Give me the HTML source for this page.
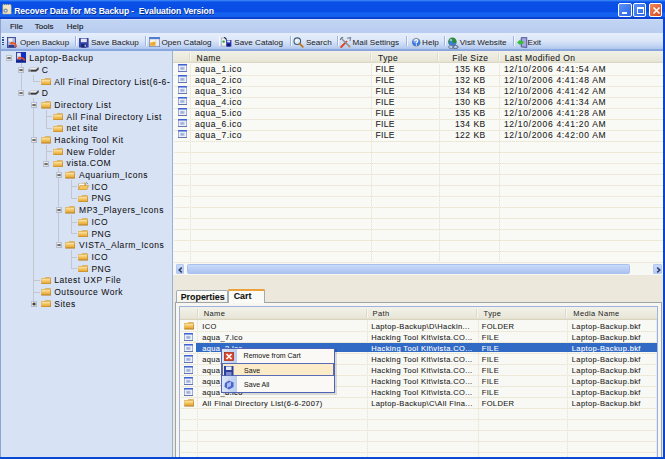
<!DOCTYPE html><html><head><meta charset="utf-8"><style>
*{margin:0;padding:0;box-sizing:border-box}
html,body{width:665px;height:459px;overflow:hidden;background:#d8e2f5}
body{position:relative;font-family:"Liberation Sans",sans-serif}
div{position:absolute}
.t{white-space:pre;line-height:12px;height:12px;-webkit-text-stroke:0.08px currentColor}
</style></head><body>
<div style="left:0.00px;top:0.00px;width:665.00px;height:18.50px;background:linear-gradient(to bottom,#3d8cf8 0px,#2a74f2 1px,#0a4fe6 2px,#084ee6 11.5px,#1662f0 13px,#1460ee 16.5px,#0a42d2 17.3px,#0a3ecc 18.5px)"></div>
<svg style="position:absolute;left:2px;top:4.3px" width="9.5" height="10.3" viewBox="0 0 9.5 10.3"><path d="M1 0.3H2V1H3V0.3H4V1H5V0.3H6V1H7V0.3H8L9.2 1.5V10H0.8V2z" fill="#efe6c4" stroke="#b8ac80" stroke-width="0.5"/><circle cx="3.6" cy="6.6" r="2.2" fill="#8a8f9c"/><circle cx="3.6" cy="6.6" r="0.9" fill="#e8ecf4"/></svg>
<div class="t" style="left:14.20px;top:4.60px;font-size:8.6px;letter-spacing:-0.1px;color:#fff;font-weight:bold;text-shadow:0.7px 0.7px 0 #0a2a8a;-webkit-text-stroke:0">Recover Data for MS Backup -  Evaluation Version</div>
<div style="left:618.00px;top:3.00px;width:14.00px;height:13.50px;background:linear-gradient(135deg,#5b93f8,#2a63e8);border:1px solid #fff;border-radius:2px"><div style="left:3px;top:8px;width:5px;height:2px;background:#fff"></div></div>
<div style="left:633.20px;top:3.00px;width:13.20px;height:13.50px;background:linear-gradient(135deg,#5b93f8,#2a63e8);border:1px solid #fff;border-radius:2px"><div style="left:2.5px;top:2.5px;width:7px;height:7px;border:1px solid #fff;border-top-width:2px"></div></div>
<div style="left:648.50px;top:3.00px;width:13.00px;height:13.50px;background:linear-gradient(135deg,#ef8a5e,#d9461c);border:1px solid #fff;border-radius:2px"><svg style="position:absolute;left:2px;top:2px" width="9" height="9" viewBox="0 0 9 9"><path d="M1.5 1.5L7.5 7.5M7.5 1.5L1.5 7.5" stroke="#fff" stroke-width="1.6"/></svg></div>
<div style="left:1.00px;top:18.50px;width:662.00px;height:14.80px;background:linear-gradient(to bottom,#d8e4f8 0px,#c2d4f3 1.2px,#bdd0f2 8px,#b8ccf0 14.8px)"></div>
<div class="t" style="left:9.90px;top:21.00px;font-size:7.9px;letter-spacing:0.1px;color:#1a1a1a;-webkit-text-stroke:0.15px #1a1a1a">File</div>
<div class="t" style="left:34.70px;top:21.00px;font-size:7.9px;letter-spacing:0.1px;color:#1a1a1a;-webkit-text-stroke:0.15px #1a1a1a">Tools</div>
<div class="t" style="left:66.80px;top:21.00px;font-size:7.9px;letter-spacing:0.1px;color:#1a1a1a;-webkit-text-stroke:0.15px #1a1a1a">Help</div>
<div style="left:1.00px;top:33.30px;width:662.00px;height:16.40px;background:linear-gradient(to bottom,#e6eefb 0%,#dbe6f8 45%,#c3d5f3 75%,#a8c1ec 100%)"></div>
<div style="left:1.00px;top:48.60px;width:662.00px;height:2.40px;background:linear-gradient(to bottom,#8eabe0,#86a4dc)"></div>
<div style="left:2.3px;top:36.5px;width:1.5px;height:9px;background:repeating-linear-gradient(to bottom,#284d96 0 1.3px,transparent 1.3px 2.3px)"></div>
<svg style="position:absolute;left:6.8px;top:37px" width="11" height="11" viewBox="0 0 11 11"><rect x="0.4" y="0.4" width="8" height="10" fill="#aab4d4" stroke="#28368a" stroke-width="0.8"/><rect x="1.6" y="1.4" width="4" height="3.2" fill="#eef0f8"/><rect x="1.4" y="8" width="6" height="2" fill="#2c3a8c"/><path d="M4.2 6.2 Q8.8 5.2 9.3 10.2" stroke="#f0521c" stroke-width="1.6" fill="none"/><path d="M2.6 6.2L5.6 4.6L5.6 8.2z" fill="#f0521c"/></svg>
<div class="t" style="left:19.90px;top:37.00px;font-size:8.1px;letter-spacing:0.02px;color:#1a1a1a;-webkit-text-stroke:0">Open Backup</div>
<div style="left:74.60px;top:36.30px;width:1.00px;height:10.20px;background:#9fb4dc"></div>
<div style="left:76.00px;top:36.30px;width:1.00px;height:10.20px;background:#f4f7fd"></div>
<svg style="position:absolute;left:79px;top:38px" width="10" height="10" viewBox="0 0 10 10"><rect x="0" y="0" width="9.6" height="9.6" rx="0.6" fill="#3242a6"/><rect x="1.8" y="0.6" width="6" height="3.6" fill="#e4e8f6"/><rect x="2.2" y="6" width="5" height="3.6" fill="#1a2470"/><rect x="5.6" y="6.6" width="1.2" height="2.2" fill="#c8d0f0"/></svg>
<div class="t" style="left:90.90px;top:37.00px;font-size:8.1px;letter-spacing:0.02px;color:#1a1a1a;-webkit-text-stroke:0">Save Backup</div>
<div style="left:144.80px;top:36.30px;width:1.00px;height:10.20px;background:#9fb4dc"></div>
<div style="left:146.00px;top:36.30px;width:1.00px;height:10.20px;background:#f4f7fd"></div>
<svg style="position:absolute;left:149px;top:37px" width="11" height="10" viewBox="0 0 11 10"><rect x="0.3" y="0.3" width="10.4" height="9.4" fill="#c7cfe0" stroke="#6a7aa8" stroke-width="0.6"/><rect x="0.3" y="0.3" width="10.4" height="1.6" fill="#3d72d8"/><rect x="1.2" y="2.6" width="5.4" height="6.2" fill="#fbf5e2"/><path d="M1.2 5.4H3.4L4 4.8H6.4V8.8H1.2z" fill="#f0a828"/><rect x="7.2" y="2.6" width="2.6" height="6.2" fill="#eef1f8"/></svg>
<div class="t" style="left:161.40px;top:37.00px;font-size:8.1px;letter-spacing:0.02px;color:#1a1a1a;-webkit-text-stroke:0">Open Catalog</div>
<div style="left:218.50px;top:36.30px;width:1.00px;height:10.20px;background:#9fb4dc"></div>
<div style="left:219.00px;top:36.30px;width:1.00px;height:10.20px;background:#f4f7fd"></div>
<svg style="position:absolute;left:221.2px;top:37px" width="11" height="10" viewBox="0 0 11 10"><rect x="0.3" y="1" width="5.2" height="8" fill="#f4f1e6" stroke="#8a93b0" stroke-width="0.5"/><circle cx="2.6" cy="4.6" r="1.2" fill="#1aa048"/><path d="M3.2 0.2L5.6 2.6" stroke="#1a2a60" stroke-width="1.2"/><rect x="5.2" y="3" width="5.2" height="6.6" fill="#2430a8"/><rect x="6.2" y="3.4" width="3" height="2" fill="#e0e6fa"/><rect x="6.4" y="7" width="2.6" height="2.4" fill="#101a60"/></svg>
<div class="t" style="left:234.30px;top:37.00px;font-size:8.1px;letter-spacing:0.02px;color:#1a1a1a;-webkit-text-stroke:0">Save Catalog</div>
<div style="left:289.70px;top:36.30px;width:1.00px;height:10.20px;background:#9fb4dc"></div>
<div style="left:291.00px;top:36.30px;width:1.00px;height:10.20px;background:#f4f7fd"></div>
<svg style="position:absolute;left:293.1px;top:37px" width="11" height="11" viewBox="0 0 11 11"><circle cx="4.3" cy="4.2" r="3.3" fill="#d8ecfb" stroke="#4a5a78" stroke-width="1.1"/><circle cx="3.6" cy="3.4" r="1.2" fill="#ffffff"/><path d="M6.6 6.6L9.8 9.8" stroke="#c07818" stroke-width="1.9" stroke-linecap="round"/></svg>
<div class="t" style="left:305.90px;top:37.00px;font-size:8.1px;letter-spacing:0.02px;color:#1a1a1a;-webkit-text-stroke:0">Search</div>
<div style="left:337.00px;top:36.30px;width:1.00px;height:10.20px;background:#9fb4dc"></div>
<div style="left:338.00px;top:36.30px;width:1.00px;height:10.20px;background:#f4f7fd"></div>
<svg style="position:absolute;left:339.8px;top:37px" width="12" height="11" viewBox="0 0 12 11"><path d="M1.2 10L6.5 4.6" stroke="#e0401a" stroke-width="1.8" stroke-linecap="round"/><path d="M2.2 2.2L9.6 9.6" stroke="#8a909c" stroke-width="1.5"/><path d="M0.6 3.2A2.3 2.3 0 0 1 3.2 0.6" stroke="#6e7480" stroke-width="1.3" fill="none"/><path d="M7 1.2L10.6 0.6L10 4.2" stroke="#7a8090" stroke-width="1.1" fill="none"/><circle cx="9.6" cy="9.4" r="1" fill="#c89238"/></svg>
<div class="t" style="left:352.60px;top:37.00px;font-size:8.1px;letter-spacing:0.02px;color:#1a1a1a;-webkit-text-stroke:0">Mail Settings</div>
<div style="left:405.80px;top:36.30px;width:1.00px;height:10.20px;background:#9fb4dc"></div>
<div style="left:407.00px;top:36.30px;width:1.00px;height:10.20px;background:#f4f7fd"></div>
<svg style="position:absolute;left:410.5px;top:37px" width="11" height="11" viewBox="0 0 11 11"><circle cx="5.2" cy="5.4" r="4.8" fill="#e8d8a0"/><circle cx="5.2" cy="5.4" r="4.2" fill="#3a78e0"/><circle cx="4.2" cy="4" r="2.2" fill="#8cb8f4" opacity="0.7"/><path d="M3.6 4.1Q3.8 2.6 5.3 2.6Q6.9 2.7 6.8 4Q6.7 5 5.4 5.6V6.6" stroke="#fff" stroke-width="1.2" fill="none"/><rect x="4.8" y="7.4" width="1.2" height="1.2" fill="#fff"/></svg>
<div class="t" style="left:422.10px;top:37.00px;font-size:8.1px;letter-spacing:0.02px;color:#1a1a1a;-webkit-text-stroke:0">Help</div>
<div style="left:444.20px;top:36.30px;width:1.00px;height:10.20px;background:#9fb4dc"></div>
<div style="left:445.00px;top:36.30px;width:1.00px;height:10.20px;background:#f4f7fd"></div>
<svg style="position:absolute;left:446.9px;top:36.5px" width="12" height="12" viewBox="0 0 12 12"><circle cx="5.4" cy="4.8" r="4.3" fill="#2c8a3a"/><path d="M2 2.6Q4.6 1.4 5.6 3.4Q4.4 5.4 6.6 6.2Q8.4 5 9.4 6.4Q8 9 5.4 9.1Q3 9 1.6 6.6Q3.2 6 2 2.6z" fill="#3c7cd8"/><circle cx="4" cy="3" r="1.3" fill="#b8e8a8" opacity="0.7"/><ellipse cx="4.2" cy="10" rx="2.8" ry="1.5" fill="none" stroke="#7a869e" stroke-width="1"/><ellipse cx="8.4" cy="10" rx="2.8" ry="1.5" fill="none" stroke="#5a6680" stroke-width="1"/></svg>
<div class="t" style="left:459.80px;top:37.00px;font-size:8.1px;letter-spacing:0.02px;color:#1a1a1a;-webkit-text-stroke:0">Visit Website</div>
<div style="left:513.00px;top:36.30px;width:1.00px;height:10.20px;background:#9fb4dc"></div>
<div style="left:514.00px;top:36.30px;width:1.00px;height:10.20px;background:#f4f7fd"></div>
<svg style="position:absolute;left:517.3px;top:37px" width="11" height="11" viewBox="0 0 11 11"><path d="M4.2 0.6L9.8 0.2V10.6L4.2 10z" fill="#7a78c8" stroke="#3a3e80" stroke-width="0.6"/><path d="M5 1.4L9 1.2V9.6L5 9.2z" fill="#a8a8e0"/><path d="M0 5.4L3.6 2.2V4H6.4V6.8H3.6V8.6z" fill="#34c030"/></svg>
<div class="t" style="left:527.50px;top:37.00px;font-size:8.1px;letter-spacing:0.02px;color:#1a1a1a;-webkit-text-stroke:0">Exit</div>
<div style="left:1.00px;top:50.50px;width:170.80px;height:406.10px;background:#d8e2f5"></div>
<div style="left:171.70px;top:50.50px;width:1.20px;height:406.10px;background:#9ab0d8"></div>
<div style="left:21.00px;top:62.90px;width:1.00px;height:7.19px;background:#c3c6ce"></div>
<div style="left:33.00px;top:74.59px;width:1.00px;height:7.19px;background:#c3c6ce"></div>
<div style="left:33.80px;top:81.00px;width:6.00px;height:1.00px;background:#c3c6ce"></div>
<div style="left:21.00px;top:62.90px;width:1.00px;height:30.57px;background:#c3c6ce"></div>
<div style="left:33.00px;top:97.97px;width:1.00px;height:7.19px;background:#c3c6ce"></div>
<div style="left:46.00px;top:109.66px;width:1.00px;height:7.19px;background:#c3c6ce"></div>
<div style="left:46.20px;top:116.00px;width:6.00px;height:1.00px;background:#c3c6ce"></div>
<div style="left:46.00px;top:109.66px;width:1.00px;height:18.88px;background:#c3c6ce"></div>
<div style="left:46.20px;top:128.00px;width:6.00px;height:1.00px;background:#c3c6ce"></div>
<div style="left:33.00px;top:97.97px;width:1.00px;height:42.26px;background:#c3c6ce"></div>
<div style="left:46.00px;top:144.73px;width:1.00px;height:7.19px;background:#c3c6ce"></div>
<div style="left:46.20px;top:151.00px;width:6.00px;height:1.00px;background:#c3c6ce"></div>
<div style="left:46.00px;top:144.73px;width:1.00px;height:18.88px;background:#c3c6ce"></div>
<div style="left:58.00px;top:168.11px;width:1.00px;height:7.19px;background:#c3c6ce"></div>
<div style="left:71.00px;top:179.80px;width:1.00px;height:7.19px;background:#c3c6ce"></div>
<div style="left:71.00px;top:186.00px;width:6.00px;height:1.00px;background:#c3c6ce"></div>
<div style="left:71.00px;top:179.80px;width:1.00px;height:18.88px;background:#c3c6ce"></div>
<div style="left:71.00px;top:198.00px;width:6.00px;height:1.00px;background:#c3c6ce"></div>
<div style="left:58.00px;top:168.11px;width:1.00px;height:42.26px;background:#c3c6ce"></div>
<div style="left:71.00px;top:214.87px;width:1.00px;height:7.19px;background:#c3c6ce"></div>
<div style="left:71.00px;top:222.00px;width:6.00px;height:1.00px;background:#c3c6ce"></div>
<div style="left:71.00px;top:214.87px;width:1.00px;height:18.88px;background:#c3c6ce"></div>
<div style="left:71.00px;top:233.00px;width:6.00px;height:1.00px;background:#c3c6ce"></div>
<div style="left:58.00px;top:168.11px;width:1.00px;height:77.33px;background:#c3c6ce"></div>
<div style="left:71.00px;top:249.94px;width:1.00px;height:7.19px;background:#c3c6ce"></div>
<div style="left:71.00px;top:257.00px;width:6.00px;height:1.00px;background:#c3c6ce"></div>
<div style="left:71.00px;top:249.94px;width:1.00px;height:18.88px;background:#c3c6ce"></div>
<div style="left:71.00px;top:268.00px;width:6.00px;height:1.00px;background:#c3c6ce"></div>
<div style="left:33.00px;top:97.97px;width:1.00px;height:182.54px;background:#c3c6ce"></div>
<div style="left:33.80px;top:280.00px;width:6.00px;height:1.00px;background:#c3c6ce"></div>
<div style="left:33.00px;top:97.97px;width:1.00px;height:194.23px;background:#c3c6ce"></div>
<div style="left:33.80px;top:292.00px;width:6.00px;height:1.00px;background:#c3c6ce"></div>
<div style="left:33.00px;top:97.97px;width:1.00px;height:205.92px;background:#c3c6ce"></div>
<svg style="position:absolute;left:6.00px;top:55.40px" width="6" height="6" viewBox="0 0 6 6"><defs><linearGradient id="bg0" x1="0" y1="0" x2="1" y2="1"><stop offset="0" stop-color="#ffffff"/><stop offset="1" stop-color="#d4d0c2"/></linearGradient></defs><rect x="0.35" y="0.35" width="5.3" height="5.3" rx="0.6" fill="url(#bg0)" stroke="#93a4c3" stroke-width="0.7"/><path d="M1.3 3H4.7" stroke="#101010" stroke-width="1.1"/></svg>
<svg style="position:absolute;left:16px;top:52.3px" width="10" height="10.5" viewBox="0 0 10 10.5"><rect x="0" y="0" width="10" height="10.5" fill="#1f2f9e"/><rect x="0.8" y="0.8" width="4.2" height="6.5" fill="#c9ccd8"/><rect x="1.6" y="1.6" width="2.6" height="2.2" fill="#f2f2f5"/><rect x="5.2" y="0.8" width="4" height="5" fill="#0a2fd0"/><path d="M2.5 6.2 Q6.5 4.6 8.8 8.6" stroke="#f04a1a" stroke-width="1.6" fill="none"/><path d="M1.2 6.3L4.2 4.6L4 8z" fill="#f04a1a"/><rect x="0" y="8.8" width="10" height="1.7" fill="#0d1f8a"/></svg>
<div class="t" style="left:29.30px;top:52.20px;font-size:8.5px;letter-spacing:0.55px;color:#111;-webkit-text-stroke:0.05px #111">Laptop-Backup</div>
<svg style="position:absolute;left:18.40px;top:67.09px" width="6" height="6" viewBox="0 0 6 6"><defs><linearGradient id="bg1" x1="0" y1="0" x2="1" y2="1"><stop offset="0" stop-color="#ffffff"/><stop offset="1" stop-color="#d4d0c2"/></linearGradient></defs><rect x="0.35" y="0.35" width="5.3" height="5.3" rx="0.6" fill="url(#bg1)" stroke="#93a4c3" stroke-width="0.7"/><path d="M1.3 3H4.7" stroke="#101010" stroke-width="1.1"/></svg>
<svg style="position:absolute;left:28.00px;top:66.89px" width="11" height="5" viewBox="0 0 11 5"><path d="M0.3 2.6L3.2 0.3H10.7L8 2.6z" fill="#ececec" stroke="#9a9a9a" stroke-width="0.4"/><path d="M0.3 2.6H8V4.8H0.3z" fill="#8a8a8a"/><path d="M8 2.6L10.7 0.3V2.4L8 4.8z" fill="#3e3e3e"/><rect x="3" y="3" width="5" height="1.4" fill="#3a3a3a"/></svg>
<div class="t" style="left:41.80px;top:63.89px;font-size:8.5px;letter-spacing:0.55px;color:#111;-webkit-text-stroke:0.05px #111">C</div>
<svg style="position:absolute;left:40.60px;top:77.78px" width="10" height="7.5" viewBox="0 0 10 7.5"><defs><linearGradient id="fg" x1="0" y1="0" x2="0" y2="1"><stop offset="0" stop-color="#fde9b4"/><stop offset="0.45" stop-color="#f5c45e"/><stop offset="1" stop-color="#e0a030"/></linearGradient></defs><path d="M0.3 1H3.6L4.4 0.2H9.7V7.3H0.3z" fill="#d9a540"/><rect x="0.6" y="1.7" width="9" height="5.2" fill="url(#fg)"/><rect x="0.3" y="6.7" width="9.4" height="0.7" fill="#a8741c"/><rect x="9.1" y="1.7" width="0.6" height="5.6" fill="#b98428"/></svg>
<div class="t" style="left:54.20px;top:75.58px;font-size:8.5px;letter-spacing:0.55px;color:#111;-webkit-text-stroke:0.05px #111">All Final Directory List(6-6-</div>
<svg style="position:absolute;left:18.40px;top:90.47px" width="6" height="6" viewBox="0 0 6 6"><defs><linearGradient id="bg3" x1="0" y1="0" x2="1" y2="1"><stop offset="0" stop-color="#ffffff"/><stop offset="1" stop-color="#d4d0c2"/></linearGradient></defs><rect x="0.35" y="0.35" width="5.3" height="5.3" rx="0.6" fill="url(#bg3)" stroke="#93a4c3" stroke-width="0.7"/><path d="M1.3 3H4.7" stroke="#101010" stroke-width="1.1"/></svg>
<svg style="position:absolute;left:28.00px;top:90.27px" width="11" height="5" viewBox="0 0 11 5"><path d="M0.3 2.6L3.2 0.3H10.7L8 2.6z" fill="#ececec" stroke="#9a9a9a" stroke-width="0.4"/><path d="M0.3 2.6H8V4.8H0.3z" fill="#8a8a8a"/><path d="M8 2.6L10.7 0.3V2.4L8 4.8z" fill="#3e3e3e"/><rect x="3" y="3" width="5" height="1.4" fill="#3a3a3a"/></svg>
<div class="t" style="left:41.80px;top:87.27px;font-size:8.5px;letter-spacing:0.55px;color:#111;-webkit-text-stroke:0.05px #111">D</div>
<svg style="position:absolute;left:30.80px;top:102.16px" width="6" height="6" viewBox="0 0 6 6"><defs><linearGradient id="bg4" x1="0" y1="0" x2="1" y2="1"><stop offset="0" stop-color="#ffffff"/><stop offset="1" stop-color="#d4d0c2"/></linearGradient></defs><rect x="0.35" y="0.35" width="5.3" height="5.3" rx="0.6" fill="url(#bg4)" stroke="#93a4c3" stroke-width="0.7"/><path d="M1.3 3H4.7" stroke="#101010" stroke-width="1.1"/></svg>
<svg style="position:absolute;left:40.60px;top:101.16px" width="10" height="7.5" viewBox="0 0 10 7.5"><defs><linearGradient id="fg" x1="0" y1="0" x2="0" y2="1"><stop offset="0" stop-color="#fde9b4"/><stop offset="0.45" stop-color="#f5c45e"/><stop offset="1" stop-color="#e0a030"/></linearGradient></defs><path d="M0.3 1H3.6L4.4 0.2H9.7V7.3H0.3z" fill="#d9a540"/><rect x="0.6" y="1.7" width="9" height="5.2" fill="url(#fg)"/><rect x="0.3" y="6.7" width="9.4" height="0.7" fill="#a8741c"/><rect x="9.1" y="1.7" width="0.6" height="5.6" fill="#b98428"/></svg>
<div class="t" style="left:54.20px;top:98.96px;font-size:8.5px;letter-spacing:0.55px;color:#111;-webkit-text-stroke:0.05px #111">Directory List</div>
<svg style="position:absolute;left:53.00px;top:112.85px" width="10" height="7.5" viewBox="0 0 10 7.5"><defs><linearGradient id="fg" x1="0" y1="0" x2="0" y2="1"><stop offset="0" stop-color="#fde9b4"/><stop offset="0.45" stop-color="#f5c45e"/><stop offset="1" stop-color="#e0a030"/></linearGradient></defs><path d="M0.3 1H3.6L4.4 0.2H9.7V7.3H0.3z" fill="#d9a540"/><rect x="0.6" y="1.7" width="9" height="5.2" fill="url(#fg)"/><rect x="0.3" y="6.7" width="9.4" height="0.7" fill="#a8741c"/><rect x="9.1" y="1.7" width="0.6" height="5.6" fill="#b98428"/></svg>
<div class="t" style="left:66.60px;top:110.65px;font-size:8.5px;letter-spacing:0.55px;color:#111;-webkit-text-stroke:0.05px #111">All Final Directory List</div>
<svg style="position:absolute;left:53.00px;top:124.54px" width="10" height="7.5" viewBox="0 0 10 7.5"><defs><linearGradient id="fg" x1="0" y1="0" x2="0" y2="1"><stop offset="0" stop-color="#fde9b4"/><stop offset="0.45" stop-color="#f5c45e"/><stop offset="1" stop-color="#e0a030"/></linearGradient></defs><path d="M0.3 1H3.6L4.4 0.2H9.7V7.3H0.3z" fill="#d9a540"/><rect x="0.6" y="1.7" width="9" height="5.2" fill="url(#fg)"/><rect x="0.3" y="6.7" width="9.4" height="0.7" fill="#a8741c"/><rect x="9.1" y="1.7" width="0.6" height="5.6" fill="#b98428"/></svg>
<div class="t" style="left:66.60px;top:122.34px;font-size:8.5px;letter-spacing:0.55px;color:#111;-webkit-text-stroke:0.05px #111">net site</div>
<svg style="position:absolute;left:30.80px;top:137.23px" width="6" height="6" viewBox="0 0 6 6"><defs><linearGradient id="bg7" x1="0" y1="0" x2="1" y2="1"><stop offset="0" stop-color="#ffffff"/><stop offset="1" stop-color="#d4d0c2"/></linearGradient></defs><rect x="0.35" y="0.35" width="5.3" height="5.3" rx="0.6" fill="url(#bg7)" stroke="#93a4c3" stroke-width="0.7"/><path d="M1.3 3H4.7" stroke="#101010" stroke-width="1.1"/></svg>
<svg style="position:absolute;left:40.60px;top:136.23px" width="10" height="7.5" viewBox="0 0 10 7.5"><defs><linearGradient id="fg" x1="0" y1="0" x2="0" y2="1"><stop offset="0" stop-color="#fde9b4"/><stop offset="0.45" stop-color="#f5c45e"/><stop offset="1" stop-color="#e0a030"/></linearGradient></defs><path d="M0.3 1H3.6L4.4 0.2H9.7V7.3H0.3z" fill="#d9a540"/><rect x="0.6" y="1.7" width="9" height="5.2" fill="url(#fg)"/><rect x="0.3" y="6.7" width="9.4" height="0.7" fill="#a8741c"/><rect x="9.1" y="1.7" width="0.6" height="5.6" fill="#b98428"/></svg>
<div class="t" style="left:54.20px;top:134.03px;font-size:8.5px;letter-spacing:0.55px;color:#111;-webkit-text-stroke:0.05px #111">Hacking Tool Kit</div>
<svg style="position:absolute;left:53.00px;top:147.92px" width="10" height="7.5" viewBox="0 0 10 7.5"><defs><linearGradient id="fg" x1="0" y1="0" x2="0" y2="1"><stop offset="0" stop-color="#fde9b4"/><stop offset="0.45" stop-color="#f5c45e"/><stop offset="1" stop-color="#e0a030"/></linearGradient></defs><path d="M0.3 1H3.6L4.4 0.2H9.7V7.3H0.3z" fill="#d9a540"/><rect x="0.6" y="1.7" width="9" height="5.2" fill="url(#fg)"/><rect x="0.3" y="6.7" width="9.4" height="0.7" fill="#a8741c"/><rect x="9.1" y="1.7" width="0.6" height="5.6" fill="#b98428"/></svg>
<div class="t" style="left:66.60px;top:145.72px;font-size:8.5px;letter-spacing:0.55px;color:#111;-webkit-text-stroke:0.05px #111">New Folder</div>
<svg style="position:absolute;left:43.20px;top:160.61px" width="6" height="6" viewBox="0 0 6 6"><defs><linearGradient id="bg9" x1="0" y1="0" x2="1" y2="1"><stop offset="0" stop-color="#ffffff"/><stop offset="1" stop-color="#d4d0c2"/></linearGradient></defs><rect x="0.35" y="0.35" width="5.3" height="5.3" rx="0.6" fill="url(#bg9)" stroke="#93a4c3" stroke-width="0.7"/><path d="M1.3 3H4.7" stroke="#101010" stroke-width="1.1"/></svg>
<svg style="position:absolute;left:53.00px;top:159.61px" width="10" height="7.5" viewBox="0 0 10 7.5"><defs><linearGradient id="fg" x1="0" y1="0" x2="0" y2="1"><stop offset="0" stop-color="#fde9b4"/><stop offset="0.45" stop-color="#f5c45e"/><stop offset="1" stop-color="#e0a030"/></linearGradient></defs><path d="M0.3 1H3.6L4.4 0.2H9.7V7.3H0.3z" fill="#d9a540"/><rect x="0.6" y="1.7" width="9" height="5.2" fill="url(#fg)"/><rect x="0.3" y="6.7" width="9.4" height="0.7" fill="#a8741c"/><rect x="9.1" y="1.7" width="0.6" height="5.6" fill="#b98428"/></svg>
<div class="t" style="left:66.60px;top:157.41px;font-size:8.5px;letter-spacing:0.55px;color:#111;-webkit-text-stroke:0.05px #111">vista.COM</div>
<svg style="position:absolute;left:55.60px;top:172.30px" width="6" height="6" viewBox="0 0 6 6"><defs><linearGradient id="bg10" x1="0" y1="0" x2="1" y2="1"><stop offset="0" stop-color="#ffffff"/><stop offset="1" stop-color="#d4d0c2"/></linearGradient></defs><rect x="0.35" y="0.35" width="5.3" height="5.3" rx="0.6" fill="url(#bg10)" stroke="#93a4c3" stroke-width="0.7"/><path d="M1.3 3H4.7" stroke="#101010" stroke-width="1.1"/></svg>
<svg style="position:absolute;left:65.40px;top:171.30px" width="10" height="7.5" viewBox="0 0 10 7.5"><defs><linearGradient id="fg" x1="0" y1="0" x2="0" y2="1"><stop offset="0" stop-color="#fde9b4"/><stop offset="0.45" stop-color="#f5c45e"/><stop offset="1" stop-color="#e0a030"/></linearGradient></defs><path d="M0.3 1H3.6L4.4 0.2H9.7V7.3H0.3z" fill="#d9a540"/><rect x="0.6" y="1.7" width="9" height="5.2" fill="url(#fg)"/><rect x="0.3" y="6.7" width="9.4" height="0.7" fill="#a8741c"/><rect x="9.1" y="1.7" width="0.6" height="5.6" fill="#b98428"/></svg>
<div class="t" style="left:79.00px;top:169.10px;font-size:8.5px;letter-spacing:0.55px;color:#111;-webkit-text-stroke:0.05px #111">Aquarium_Icons</div>
<svg style="position:absolute;left:77.80px;top:182.39px" width="11" height="8" viewBox="0 0 11 8"><path d="M0.3 1.6H3.4L4.2 0.8H8V7.7H0.3z" fill="#d9a540"/><rect x="1" y="1.4" width="5.5" height="4" fill="#ffffff" stroke="#b0b0b0" stroke-width="0.4"/><path d="M0.3 7.7L2 3.4H10.6L8.8 7.7z" fill="#f5c45e" stroke="#b98428" stroke-width="0.5"/><path d="M8.2 0.6L9.6 1.6" stroke="#3050a0" stroke-width="0.8"/></svg>
<div class="t" style="left:91.40px;top:180.79px;font-size:8.5px;letter-spacing:0.55px;color:#111;-webkit-text-stroke:0.05px #111">ICO</div>
<svg style="position:absolute;left:77.80px;top:194.68px" width="10" height="7.5" viewBox="0 0 10 7.5"><defs><linearGradient id="fg" x1="0" y1="0" x2="0" y2="1"><stop offset="0" stop-color="#fde9b4"/><stop offset="0.45" stop-color="#f5c45e"/><stop offset="1" stop-color="#e0a030"/></linearGradient></defs><path d="M0.3 1H3.6L4.4 0.2H9.7V7.3H0.3z" fill="#d9a540"/><rect x="0.6" y="1.7" width="9" height="5.2" fill="url(#fg)"/><rect x="0.3" y="6.7" width="9.4" height="0.7" fill="#a8741c"/><rect x="9.1" y="1.7" width="0.6" height="5.6" fill="#b98428"/></svg>
<div class="t" style="left:91.40px;top:192.48px;font-size:8.5px;letter-spacing:0.55px;color:#111;-webkit-text-stroke:0.05px #111">PNG</div>
<svg style="position:absolute;left:55.60px;top:207.37px" width="6" height="6" viewBox="0 0 6 6"><defs><linearGradient id="bg13" x1="0" y1="0" x2="1" y2="1"><stop offset="0" stop-color="#ffffff"/><stop offset="1" stop-color="#d4d0c2"/></linearGradient></defs><rect x="0.35" y="0.35" width="5.3" height="5.3" rx="0.6" fill="url(#bg13)" stroke="#93a4c3" stroke-width="0.7"/><path d="M1.3 3H4.7" stroke="#101010" stroke-width="1.1"/></svg>
<svg style="position:absolute;left:65.40px;top:206.37px" width="10" height="7.5" viewBox="0 0 10 7.5"><defs><linearGradient id="fg" x1="0" y1="0" x2="0" y2="1"><stop offset="0" stop-color="#fde9b4"/><stop offset="0.45" stop-color="#f5c45e"/><stop offset="1" stop-color="#e0a030"/></linearGradient></defs><path d="M0.3 1H3.6L4.4 0.2H9.7V7.3H0.3z" fill="#d9a540"/><rect x="0.6" y="1.7" width="9" height="5.2" fill="url(#fg)"/><rect x="0.3" y="6.7" width="9.4" height="0.7" fill="#a8741c"/><rect x="9.1" y="1.7" width="0.6" height="5.6" fill="#b98428"/></svg>
<div class="t" style="left:79.00px;top:204.17px;font-size:8.5px;letter-spacing:0.55px;color:#111;-webkit-text-stroke:0.05px #111">MP3_Players_Icons</div>
<svg style="position:absolute;left:77.80px;top:218.06px" width="10" height="7.5" viewBox="0 0 10 7.5"><defs><linearGradient id="fg" x1="0" y1="0" x2="0" y2="1"><stop offset="0" stop-color="#fde9b4"/><stop offset="0.45" stop-color="#f5c45e"/><stop offset="1" stop-color="#e0a030"/></linearGradient></defs><path d="M0.3 1H3.6L4.4 0.2H9.7V7.3H0.3z" fill="#d9a540"/><rect x="0.6" y="1.7" width="9" height="5.2" fill="url(#fg)"/><rect x="0.3" y="6.7" width="9.4" height="0.7" fill="#a8741c"/><rect x="9.1" y="1.7" width="0.6" height="5.6" fill="#b98428"/></svg>
<div class="t" style="left:91.40px;top:215.86px;font-size:8.5px;letter-spacing:0.55px;color:#111;-webkit-text-stroke:0.05px #111">ICO</div>
<svg style="position:absolute;left:77.80px;top:229.75px" width="10" height="7.5" viewBox="0 0 10 7.5"><defs><linearGradient id="fg" x1="0" y1="0" x2="0" y2="1"><stop offset="0" stop-color="#fde9b4"/><stop offset="0.45" stop-color="#f5c45e"/><stop offset="1" stop-color="#e0a030"/></linearGradient></defs><path d="M0.3 1H3.6L4.4 0.2H9.7V7.3H0.3z" fill="#d9a540"/><rect x="0.6" y="1.7" width="9" height="5.2" fill="url(#fg)"/><rect x="0.3" y="6.7" width="9.4" height="0.7" fill="#a8741c"/><rect x="9.1" y="1.7" width="0.6" height="5.6" fill="#b98428"/></svg>
<div class="t" style="left:91.40px;top:227.55px;font-size:8.5px;letter-spacing:0.55px;color:#111;-webkit-text-stroke:0.05px #111">PNG</div>
<svg style="position:absolute;left:55.60px;top:242.44px" width="6" height="6" viewBox="0 0 6 6"><defs><linearGradient id="bg16" x1="0" y1="0" x2="1" y2="1"><stop offset="0" stop-color="#ffffff"/><stop offset="1" stop-color="#d4d0c2"/></linearGradient></defs><rect x="0.35" y="0.35" width="5.3" height="5.3" rx="0.6" fill="url(#bg16)" stroke="#93a4c3" stroke-width="0.7"/><path d="M1.3 3H4.7" stroke="#101010" stroke-width="1.1"/></svg>
<svg style="position:absolute;left:65.40px;top:241.44px" width="10" height="7.5" viewBox="0 0 10 7.5"><defs><linearGradient id="fg" x1="0" y1="0" x2="0" y2="1"><stop offset="0" stop-color="#fde9b4"/><stop offset="0.45" stop-color="#f5c45e"/><stop offset="1" stop-color="#e0a030"/></linearGradient></defs><path d="M0.3 1H3.6L4.4 0.2H9.7V7.3H0.3z" fill="#d9a540"/><rect x="0.6" y="1.7" width="9" height="5.2" fill="url(#fg)"/><rect x="0.3" y="6.7" width="9.4" height="0.7" fill="#a8741c"/><rect x="9.1" y="1.7" width="0.6" height="5.6" fill="#b98428"/></svg>
<div class="t" style="left:79.00px;top:239.24px;font-size:8.5px;letter-spacing:0.55px;color:#111;-webkit-text-stroke:0.05px #111">VISTA_Alarm_Icons</div>
<svg style="position:absolute;left:77.80px;top:253.13px" width="10" height="7.5" viewBox="0 0 10 7.5"><defs><linearGradient id="fg" x1="0" y1="0" x2="0" y2="1"><stop offset="0" stop-color="#fde9b4"/><stop offset="0.45" stop-color="#f5c45e"/><stop offset="1" stop-color="#e0a030"/></linearGradient></defs><path d="M0.3 1H3.6L4.4 0.2H9.7V7.3H0.3z" fill="#d9a540"/><rect x="0.6" y="1.7" width="9" height="5.2" fill="url(#fg)"/><rect x="0.3" y="6.7" width="9.4" height="0.7" fill="#a8741c"/><rect x="9.1" y="1.7" width="0.6" height="5.6" fill="#b98428"/></svg>
<div class="t" style="left:91.40px;top:250.93px;font-size:8.5px;letter-spacing:0.55px;color:#111;-webkit-text-stroke:0.05px #111">ICO</div>
<svg style="position:absolute;left:77.80px;top:264.82px" width="10" height="7.5" viewBox="0 0 10 7.5"><defs><linearGradient id="fg" x1="0" y1="0" x2="0" y2="1"><stop offset="0" stop-color="#fde9b4"/><stop offset="0.45" stop-color="#f5c45e"/><stop offset="1" stop-color="#e0a030"/></linearGradient></defs><path d="M0.3 1H3.6L4.4 0.2H9.7V7.3H0.3z" fill="#d9a540"/><rect x="0.6" y="1.7" width="9" height="5.2" fill="url(#fg)"/><rect x="0.3" y="6.7" width="9.4" height="0.7" fill="#a8741c"/><rect x="9.1" y="1.7" width="0.6" height="5.6" fill="#b98428"/></svg>
<div class="t" style="left:91.40px;top:262.62px;font-size:8.5px;letter-spacing:0.55px;color:#111;-webkit-text-stroke:0.05px #111">PNG</div>
<svg style="position:absolute;left:40.60px;top:276.51px" width="10" height="7.5" viewBox="0 0 10 7.5"><defs><linearGradient id="fg" x1="0" y1="0" x2="0" y2="1"><stop offset="0" stop-color="#fde9b4"/><stop offset="0.45" stop-color="#f5c45e"/><stop offset="1" stop-color="#e0a030"/></linearGradient></defs><path d="M0.3 1H3.6L4.4 0.2H9.7V7.3H0.3z" fill="#d9a540"/><rect x="0.6" y="1.7" width="9" height="5.2" fill="url(#fg)"/><rect x="0.3" y="6.7" width="9.4" height="0.7" fill="#a8741c"/><rect x="9.1" y="1.7" width="0.6" height="5.6" fill="#b98428"/></svg>
<div class="t" style="left:54.20px;top:274.31px;font-size:8.5px;letter-spacing:0.55px;color:#111;-webkit-text-stroke:0.05px #111">Latest UXP File</div>
<svg style="position:absolute;left:40.60px;top:288.20px" width="10" height="7.5" viewBox="0 0 10 7.5"><defs><linearGradient id="fg" x1="0" y1="0" x2="0" y2="1"><stop offset="0" stop-color="#fde9b4"/><stop offset="0.45" stop-color="#f5c45e"/><stop offset="1" stop-color="#e0a030"/></linearGradient></defs><path d="M0.3 1H3.6L4.4 0.2H9.7V7.3H0.3z" fill="#d9a540"/><rect x="0.6" y="1.7" width="9" height="5.2" fill="url(#fg)"/><rect x="0.3" y="6.7" width="9.4" height="0.7" fill="#a8741c"/><rect x="9.1" y="1.7" width="0.6" height="5.6" fill="#b98428"/></svg>
<div class="t" style="left:54.20px;top:286.00px;font-size:8.5px;letter-spacing:0.55px;color:#111;-webkit-text-stroke:0.05px #111">Outsource Work</div>
<svg style="position:absolute;left:30.80px;top:300.89px" width="6" height="6" viewBox="0 0 6 6"><defs><linearGradient id="bg21" x1="0" y1="0" x2="1" y2="1"><stop offset="0" stop-color="#ffffff"/><stop offset="1" stop-color="#d4d0c2"/></linearGradient></defs><rect x="0.35" y="0.35" width="5.3" height="5.3" rx="0.6" fill="url(#bg21)" stroke="#93a4c3" stroke-width="0.7"/><path d="M1.3 3H4.7" stroke="#101010" stroke-width="1.1"/><path d="M3 1.4V4.6" stroke="#1a1a1a" stroke-width="1"/></svg>
<svg style="position:absolute;left:40.60px;top:299.89px" width="10" height="7.5" viewBox="0 0 10 7.5"><defs><linearGradient id="fg" x1="0" y1="0" x2="0" y2="1"><stop offset="0" stop-color="#fde9b4"/><stop offset="0.45" stop-color="#f5c45e"/><stop offset="1" stop-color="#e0a030"/></linearGradient></defs><path d="M0.3 1H3.6L4.4 0.2H9.7V7.3H0.3z" fill="#d9a540"/><rect x="0.6" y="1.7" width="9" height="5.2" fill="url(#fg)"/><rect x="0.3" y="6.7" width="9.4" height="0.7" fill="#a8741c"/><rect x="9.1" y="1.7" width="0.6" height="5.6" fill="#b98428"/></svg>
<div class="t" style="left:54.20px;top:297.69px;font-size:8.5px;letter-spacing:0.55px;color:#111;-webkit-text-stroke:0.05px #111">Sites</div>
<div style="left:173.20px;top:50.50px;width:489.80px;height:212.50px;background:#f9f9f6"></div>
<div style="left:173.20px;top:50.50px;width:489.80px;height:12.30px;background:linear-gradient(to bottom,#f1f0e7,#e9e7d9 80%,#e0dcc9)"></div>
<div style="left:173.20px;top:62.00px;width:489.80px;height:1.00px;background:#dcd7c2"></div>
<div style="left:189.00px;top:52.50px;width:1.00px;height:8.00px;background:#dedacb"></div>
<div style="left:190.00px;top:52.50px;width:1.00px;height:8.00px;background:#f7f6f0"></div>
<div style="left:370.30px;top:52.50px;width:1.00px;height:8.00px;background:#dedacb"></div>
<div style="left:371.30px;top:52.50px;width:1.00px;height:8.00px;background:#f7f6f0"></div>
<div style="left:436.60px;top:52.50px;width:1.00px;height:8.00px;background:#dedacb"></div>
<div style="left:437.60px;top:52.50px;width:1.00px;height:8.00px;background:#f7f6f0"></div>
<div style="left:498.20px;top:52.50px;width:1.00px;height:8.00px;background:#dedacb"></div>
<div style="left:499.20px;top:52.50px;width:1.00px;height:8.00px;background:#f7f6f0"></div>
<div class="t" style="left:196.60px;top:52.20px;font-size:8.5px;letter-spacing:0.4px;color:#222;">Name</div>
<div class="t" style="left:378.10px;top:52.20px;font-size:8.5px;letter-spacing:0.4px;color:#222;">Type</div>
<div class="t" style="left:452.30px;top:52.20px;font-size:8.5px;letter-spacing:0.4px;color:#222;">File Size</div>
<div class="t" style="left:504.70px;top:52.20px;font-size:8.5px;letter-spacing:0.4px;color:#222;">Last Modified On</div>
<div style="left:174.00px;top:75.00px;width:489.00px;height:1.00px;background:repeating-linear-gradient(to right,#e9e3cf 0 1px,#f1eee2 1px 2px)"></div>
<div style="left:174.00px;top:86.00px;width:489.00px;height:1.00px;background:repeating-linear-gradient(to right,#e9e3cf 0 1px,#f1eee2 1px 2px)"></div>
<div style="left:174.00px;top:97.00px;width:489.00px;height:1.00px;background:repeating-linear-gradient(to right,#e9e3cf 0 1px,#f1eee2 1px 2px)"></div>
<div style="left:174.00px;top:108.00px;width:489.00px;height:1.00px;background:repeating-linear-gradient(to right,#e9e3cf 0 1px,#f1eee2 1px 2px)"></div>
<div style="left:174.00px;top:119.00px;width:489.00px;height:1.00px;background:repeating-linear-gradient(to right,#e9e3cf 0 1px,#f1eee2 1px 2px)"></div>
<div style="left:174.00px;top:130.00px;width:489.00px;height:1.00px;background:repeating-linear-gradient(to right,#e9e3cf 0 1px,#f1eee2 1px 2px)"></div>
<div style="left:174.00px;top:141.00px;width:489.00px;height:1.00px;background:repeating-linear-gradient(to right,#e9e3cf 0 1px,#f1eee2 1px 2px)"></div>
<div style="left:174.00px;top:152.00px;width:489.00px;height:1.00px;background:repeating-linear-gradient(to right,#e9e3cf 0 1px,#f1eee2 1px 2px)"></div>
<div style="left:174.00px;top:163.00px;width:489.00px;height:1.00px;background:repeating-linear-gradient(to right,#e9e3cf 0 1px,#f1eee2 1px 2px)"></div>
<div style="left:174.00px;top:174.00px;width:489.00px;height:1.00px;background:repeating-linear-gradient(to right,#e9e3cf 0 1px,#f1eee2 1px 2px)"></div>
<div style="left:174.00px;top:185.00px;width:489.00px;height:1.00px;background:repeating-linear-gradient(to right,#e9e3cf 0 1px,#f1eee2 1px 2px)"></div>
<div style="left:174.00px;top:196.00px;width:489.00px;height:1.00px;background:repeating-linear-gradient(to right,#e9e3cf 0 1px,#f1eee2 1px 2px)"></div>
<div style="left:174.00px;top:207.00px;width:489.00px;height:1.00px;background:repeating-linear-gradient(to right,#e9e3cf 0 1px,#f1eee2 1px 2px)"></div>
<div style="left:174.00px;top:218.00px;width:489.00px;height:1.00px;background:repeating-linear-gradient(to right,#e9e3cf 0 1px,#f1eee2 1px 2px)"></div>
<div style="left:174.00px;top:229.00px;width:489.00px;height:1.00px;background:repeating-linear-gradient(to right,#e9e3cf 0 1px,#f1eee2 1px 2px)"></div>
<div style="left:174.00px;top:240.00px;width:489.00px;height:1.00px;background:repeating-linear-gradient(to right,#e9e3cf 0 1px,#f1eee2 1px 2px)"></div>
<div style="left:174.00px;top:251.00px;width:489.00px;height:1.00px;background:repeating-linear-gradient(to right,#e9e3cf 0 1px,#f1eee2 1px 2px)"></div>
<div style="left:174.00px;top:262.00px;width:489.00px;height:1.00px;background:repeating-linear-gradient(to right,#e9e3cf 0 1px,#f1eee2 1px 2px)"></div>
<div style="left:190.00px;top:62.40px;width:1.00px;height:199.60px;background:repeating-linear-gradient(to bottom,#e9e3cf 0 1px,#f4f2ea 1px 2px)"></div>
<div style="left:371.00px;top:62.40px;width:1.00px;height:199.60px;background:repeating-linear-gradient(to bottom,#e9e3cf 0 1px,#f4f2ea 1px 2px)"></div>
<div style="left:439.00px;top:62.40px;width:1.00px;height:199.60px;background:repeating-linear-gradient(to bottom,#e9e3cf 0 1px,#f4f2ea 1px 2px)"></div>
<div style="left:499.00px;top:62.40px;width:1.00px;height:199.60px;background:repeating-linear-gradient(to bottom,#e9e3cf 0 1px,#f4f2ea 1px 2px)"></div>
<svg style="position:absolute;left:178.20px;top:64.14px" width="9" height="8" viewBox="0 0 9 8"><rect x="0" y="0" width="9" height="8" rx="0.8" fill="#8a9cd6"/><rect x="0" y="0" width="9" height="1.6" rx="0.6" fill="#3e62d6"/><rect x="0.8" y="1.7" width="7.4" height="5.4" fill="#f4f6fb"/><rect x="1.8" y="2.6" width="5.4" height="3.6" fill="#cfd9ee"/><rect x="2.6" y="3.2" width="3.2" height="2.4" fill="#9fb0d8"/><rect x="0" y="7.2" width="9" height="0.8" fill="#5868a8"/></svg>
<div class="t" style="left:195.00px;top:62.74px;font-size:8.5px;letter-spacing:0.55px;color:#1a1a1a;">aqua_1.ico</div>
<div class="t" style="left:375.60px;top:62.74px;font-size:8.5px;letter-spacing:0.3px;color:#1a1a1a;">FILE</div>
<div class="t" style="left:454.90px;top:62.74px;font-size:8.5px;letter-spacing:0.5px;color:#1a1a1a;">135 KB</div>
<div class="t" style="left:503.90px;top:62.74px;font-size:8.5px;letter-spacing:0.69px;color:#1a1a1a;">12/10/2006 4:41:54 AM</div>
<svg style="position:absolute;left:178.20px;top:75.14px" width="9" height="8" viewBox="0 0 9 8"><rect x="0" y="0" width="9" height="8" rx="0.8" fill="#8a9cd6"/><rect x="0" y="0" width="9" height="1.6" rx="0.6" fill="#3e62d6"/><rect x="0.8" y="1.7" width="7.4" height="5.4" fill="#f4f6fb"/><rect x="1.8" y="2.6" width="5.4" height="3.6" fill="#cfd9ee"/><rect x="2.6" y="3.2" width="3.2" height="2.4" fill="#9fb0d8"/><rect x="0" y="7.2" width="9" height="0.8" fill="#5868a8"/></svg>
<div class="t" style="left:195.00px;top:73.74px;font-size:8.5px;letter-spacing:0.55px;color:#1a1a1a;">aqua_2.ico</div>
<div class="t" style="left:375.60px;top:73.74px;font-size:8.5px;letter-spacing:0.3px;color:#1a1a1a;">FILE</div>
<div class="t" style="left:454.90px;top:73.74px;font-size:8.5px;letter-spacing:0.5px;color:#1a1a1a;">132 KB</div>
<div class="t" style="left:503.90px;top:73.74px;font-size:8.5px;letter-spacing:0.69px;color:#1a1a1a;">12/10/2006 4:41:48 AM</div>
<svg style="position:absolute;left:178.20px;top:86.14px" width="9" height="8" viewBox="0 0 9 8"><rect x="0" y="0" width="9" height="8" rx="0.8" fill="#8a9cd6"/><rect x="0" y="0" width="9" height="1.6" rx="0.6" fill="#3e62d6"/><rect x="0.8" y="1.7" width="7.4" height="5.4" fill="#f4f6fb"/><rect x="1.8" y="2.6" width="5.4" height="3.6" fill="#cfd9ee"/><rect x="2.6" y="3.2" width="3.2" height="2.4" fill="#9fb0d8"/><rect x="0" y="7.2" width="9" height="0.8" fill="#5868a8"/></svg>
<div class="t" style="left:195.00px;top:84.74px;font-size:8.5px;letter-spacing:0.55px;color:#1a1a1a;">aqua_3.ico</div>
<div class="t" style="left:375.60px;top:84.74px;font-size:8.5px;letter-spacing:0.3px;color:#1a1a1a;">FILE</div>
<div class="t" style="left:454.90px;top:84.74px;font-size:8.5px;letter-spacing:0.5px;color:#1a1a1a;">134 KB</div>
<div class="t" style="left:503.90px;top:84.74px;font-size:8.5px;letter-spacing:0.69px;color:#1a1a1a;">12/10/2006 4:41:42 AM</div>
<svg style="position:absolute;left:178.20px;top:97.14px" width="9" height="8" viewBox="0 0 9 8"><rect x="0" y="0" width="9" height="8" rx="0.8" fill="#8a9cd6"/><rect x="0" y="0" width="9" height="1.6" rx="0.6" fill="#3e62d6"/><rect x="0.8" y="1.7" width="7.4" height="5.4" fill="#f4f6fb"/><rect x="1.8" y="2.6" width="5.4" height="3.6" fill="#cfd9ee"/><rect x="2.6" y="3.2" width="3.2" height="2.4" fill="#9fb0d8"/><rect x="0" y="7.2" width="9" height="0.8" fill="#5868a8"/></svg>
<div class="t" style="left:195.00px;top:95.74px;font-size:8.5px;letter-spacing:0.55px;color:#1a1a1a;">aqua_4.ico</div>
<div class="t" style="left:375.60px;top:95.74px;font-size:8.5px;letter-spacing:0.3px;color:#1a1a1a;">FILE</div>
<div class="t" style="left:454.90px;top:95.74px;font-size:8.5px;letter-spacing:0.5px;color:#1a1a1a;">130 KB</div>
<div class="t" style="left:503.90px;top:95.74px;font-size:8.5px;letter-spacing:0.69px;color:#1a1a1a;">12/10/2006 4:41:34 AM</div>
<svg style="position:absolute;left:178.20px;top:108.14px" width="9" height="8" viewBox="0 0 9 8"><rect x="0" y="0" width="9" height="8" rx="0.8" fill="#8a9cd6"/><rect x="0" y="0" width="9" height="1.6" rx="0.6" fill="#3e62d6"/><rect x="0.8" y="1.7" width="7.4" height="5.4" fill="#f4f6fb"/><rect x="1.8" y="2.6" width="5.4" height="3.6" fill="#cfd9ee"/><rect x="2.6" y="3.2" width="3.2" height="2.4" fill="#9fb0d8"/><rect x="0" y="7.2" width="9" height="0.8" fill="#5868a8"/></svg>
<div class="t" style="left:195.00px;top:106.74px;font-size:8.5px;letter-spacing:0.55px;color:#1a1a1a;">aqua_5.ico</div>
<div class="t" style="left:375.60px;top:106.74px;font-size:8.5px;letter-spacing:0.3px;color:#1a1a1a;">FILE</div>
<div class="t" style="left:454.90px;top:106.74px;font-size:8.5px;letter-spacing:0.5px;color:#1a1a1a;">135 KB</div>
<div class="t" style="left:503.90px;top:106.74px;font-size:8.5px;letter-spacing:0.69px;color:#1a1a1a;">12/10/2006 4:41:28 AM</div>
<svg style="position:absolute;left:178.20px;top:119.14px" width="9" height="8" viewBox="0 0 9 8"><rect x="0" y="0" width="9" height="8" rx="0.8" fill="#8a9cd6"/><rect x="0" y="0" width="9" height="1.6" rx="0.6" fill="#3e62d6"/><rect x="0.8" y="1.7" width="7.4" height="5.4" fill="#f4f6fb"/><rect x="1.8" y="2.6" width="5.4" height="3.6" fill="#cfd9ee"/><rect x="2.6" y="3.2" width="3.2" height="2.4" fill="#9fb0d8"/><rect x="0" y="7.2" width="9" height="0.8" fill="#5868a8"/></svg>
<div class="t" style="left:195.00px;top:117.74px;font-size:8.5px;letter-spacing:0.55px;color:#1a1a1a;">aqua_6.ico</div>
<div class="t" style="left:375.60px;top:117.74px;font-size:8.5px;letter-spacing:0.3px;color:#1a1a1a;">FILE</div>
<div class="t" style="left:454.90px;top:117.74px;font-size:8.5px;letter-spacing:0.5px;color:#1a1a1a;">134 KB</div>
<div class="t" style="left:503.90px;top:117.74px;font-size:8.5px;letter-spacing:0.69px;color:#1a1a1a;">12/10/2006 4:41:20 AM</div>
<svg style="position:absolute;left:178.20px;top:130.14px" width="9" height="8" viewBox="0 0 9 8"><rect x="0" y="0" width="9" height="8" rx="0.8" fill="#8a9cd6"/><rect x="0" y="0" width="9" height="1.6" rx="0.6" fill="#3e62d6"/><rect x="0.8" y="1.7" width="7.4" height="5.4" fill="#f4f6fb"/><rect x="1.8" y="2.6" width="5.4" height="3.6" fill="#cfd9ee"/><rect x="2.6" y="3.2" width="3.2" height="2.4" fill="#9fb0d8"/><rect x="0" y="7.2" width="9" height="0.8" fill="#5868a8"/></svg>
<div class="t" style="left:195.00px;top:128.74px;font-size:8.5px;letter-spacing:0.55px;color:#1a1a1a;">aqua_7.ico</div>
<div class="t" style="left:375.60px;top:128.74px;font-size:8.5px;letter-spacing:0.3px;color:#1a1a1a;">FILE</div>
<div class="t" style="left:454.90px;top:128.74px;font-size:8.5px;letter-spacing:0.5px;color:#1a1a1a;">122 KB</div>
<div class="t" style="left:503.90px;top:128.74px;font-size:8.5px;letter-spacing:0.69px;color:#1a1a1a;">12/10/2006 4:42:00 AM</div>
<div style="left:173.20px;top:263.00px;width:489.80px;height:11.50px;background:#f7f7f3"></div>
<div style="left:175.90px;top:263.90px;width:8.30px;height:10.00px;background:linear-gradient(to bottom,#c9daf9,#b4c9f4);border:0.7px solid #b7c8ef;border-radius:1px"><svg style="position:absolute;left:1.6px;top:2px" width="5" height="6" viewBox="0 0 5 6"><path d="M3.8 0.6L1.2 3L3.8 5.4" stroke="#2e3c6a" stroke-width="1.5" fill="none"/></svg></div>
<div style="left:186.60px;top:264.00px;width:443.20px;height:9.70px;background:linear-gradient(to bottom,#cadbf8,#b7cbf3 60%,#adc3f0);border:0.7px solid #a9bfee;border-radius:1.5px"></div>
<div style="left:652.80px;top:263.90px;width:9.40px;height:10.00px;background:linear-gradient(to bottom,#c9daf9,#b4c9f4);border:0.7px solid #b7c8ef;border-radius:1px"><svg style="position:absolute;left:2.6px;top:2px" width="5" height="6" viewBox="0 0 5 6"><path d="M1.2 0.6L3.8 3L1.2 5.4" stroke="#2e3c6a" stroke-width="1.5" fill="none"/></svg></div>
<div style="left:173.20px;top:274.50px;width:489.80px;height:182.10px;background:#ece9dc"></div>
<div style="left:176.30px;top:290.10px;width:52.00px;height:12.70px;background:linear-gradient(to bottom,#fdfdfb,#f2f1ea);border:0.8px solid #a3abb3;border-bottom:none;border-radius:2px 2px 0 0"></div>
<div class="t" style="left:180.70px;top:291.20px;font-size:8.9px;letter-spacing:0px;color:#111;font-weight:bold;">Properties</div>
<div style="left:174.70px;top:302.00px;width:486.90px;height:154.60px;background:#f7f6f0;border:0.9px solid #9ea5a8;border-bottom:none"></div>
<div style="left:228.30px;top:289.00px;width:37.20px;height:14.00px;background:#fafaf7;border:0.8px solid #a3abb3;border-bottom:none;border-radius:2px 2px 0 0"></div>
<div style="left:228.30px;top:289.00px;width:37.20px;height:1.70px;background:#eca23c;border-radius:2px 2px 0 0"></div>
<div class="t" style="left:233.70px;top:290.00px;font-size:8.9px;letter-spacing:0px;color:#111;font-weight:bold;">Cart</div>
<div style="left:179.20px;top:305.80px;width:479.20px;height:150.80px;background:#f8f8f4;border:0.9px solid #9db2de;border-bottom:none"></div>
<div style="left:180.10px;top:306.70px;width:477.40px;height:12.90px;background:linear-gradient(to bottom,#f3f2ea,#e9e7d9 80%,#dedbc8)"></div>
<div style="left:180.10px;top:319.00px;width:477.40px;height:1.00px;background:#d9d4bd"></div>
<div style="left:196.70px;top:308.50px;width:1.00px;height:9.00px;background:#dedacb"></div>
<div style="left:197.70px;top:308.50px;width:1.00px;height:9.00px;background:#f7f6f0"></div>
<div style="left:366.30px;top:308.50px;width:1.00px;height:9.00px;background:#dedacb"></div>
<div style="left:367.30px;top:308.50px;width:1.00px;height:9.00px;background:#f7f6f0"></div>
<div style="left:475.90px;top:308.50px;width:1.00px;height:9.00px;background:#dedacb"></div>
<div style="left:476.90px;top:308.50px;width:1.00px;height:9.00px;background:#f7f6f0"></div>
<div style="left:565.30px;top:308.50px;width:1.00px;height:9.00px;background:#dedacb"></div>
<div style="left:566.30px;top:308.50px;width:1.00px;height:9.00px;background:#f7f6f0"></div>
<div class="t" style="left:203.70px;top:308.00px;font-size:7.5px;letter-spacing:0.38px;color:#222;-webkit-text-stroke:0">Name</div>
<div class="t" style="left:372.60px;top:308.00px;font-size:7.5px;letter-spacing:0.38px;color:#222;-webkit-text-stroke:0">Path</div>
<div class="t" style="left:483.60px;top:308.00px;font-size:7.5px;letter-spacing:0.38px;color:#222;-webkit-text-stroke:0">Type</div>
<div class="t" style="left:573.30px;top:308.00px;font-size:7.5px;letter-spacing:0.38px;color:#222;-webkit-text-stroke:0">Media Name</div>
<div style="left:180.50px;top:331.00px;width:476.10px;height:1.00px;background:repeating-linear-gradient(to right,#e9e3cf 0 1px,#f1eee2 1px 2px)"></div>
<div style="left:180.50px;top:342.00px;width:476.10px;height:1.00px;background:repeating-linear-gradient(to right,#e9e3cf 0 1px,#f1eee2 1px 2px)"></div>
<div style="left:180.50px;top:353.00px;width:476.10px;height:1.00px;background:repeating-linear-gradient(to right,#e9e3cf 0 1px,#f1eee2 1px 2px)"></div>
<div style="left:180.50px;top:364.00px;width:476.10px;height:1.00px;background:repeating-linear-gradient(to right,#e9e3cf 0 1px,#f1eee2 1px 2px)"></div>
<div style="left:180.50px;top:375.00px;width:476.10px;height:1.00px;background:repeating-linear-gradient(to right,#e9e3cf 0 1px,#f1eee2 1px 2px)"></div>
<div style="left:180.50px;top:386.00px;width:476.10px;height:1.00px;background:repeating-linear-gradient(to right,#e9e3cf 0 1px,#f1eee2 1px 2px)"></div>
<div style="left:180.50px;top:397.00px;width:476.10px;height:1.00px;background:repeating-linear-gradient(to right,#e9e3cf 0 1px,#f1eee2 1px 2px)"></div>
<div style="left:180.50px;top:408.00px;width:476.10px;height:1.00px;background:repeating-linear-gradient(to right,#e9e3cf 0 1px,#f1eee2 1px 2px)"></div>
<div style="left:180.50px;top:419.00px;width:476.10px;height:1.00px;background:repeating-linear-gradient(to right,#e9e3cf 0 1px,#f1eee2 1px 2px)"></div>
<div style="left:180.50px;top:430.00px;width:476.10px;height:1.00px;background:repeating-linear-gradient(to right,#e9e3cf 0 1px,#f1eee2 1px 2px)"></div>
<div style="left:180.50px;top:441.00px;width:476.10px;height:1.00px;background:repeating-linear-gradient(to right,#e9e3cf 0 1px,#f1eee2 1px 2px)"></div>
<div style="left:180.50px;top:452.00px;width:476.10px;height:1.00px;background:repeating-linear-gradient(to right,#e9e3cf 0 1px,#f1eee2 1px 2px)"></div>
<div style="left:197.00px;top:319.60px;width:1.00px;height:137.00px;background:repeating-linear-gradient(to bottom,#e9e3cf 0 1px,#f4f2ea 1px 2px)"></div>
<div style="left:367.00px;top:319.60px;width:1.00px;height:137.00px;background:repeating-linear-gradient(to bottom,#e9e3cf 0 1px,#f4f2ea 1px 2px)"></div>
<div style="left:478.00px;top:319.60px;width:1.00px;height:137.00px;background:repeating-linear-gradient(to bottom,#e9e3cf 0 1px,#f4f2ea 1px 2px)"></div>
<div style="left:567.00px;top:319.60px;width:1.00px;height:137.00px;background:repeating-linear-gradient(to bottom,#e9e3cf 0 1px,#f4f2ea 1px 2px)"></div>
<div style="left:656.40px;top:319.60px;width:1.10px;height:137.00px;background:#e2e8f4"></div>
<svg style="position:absolute;left:184.20px;top:322.30px" width="10" height="7.5" viewBox="0 0 10 7.5"><defs><linearGradient id="fg" x1="0" y1="0" x2="0" y2="1"><stop offset="0" stop-color="#fde9b4"/><stop offset="0.45" stop-color="#f5c45e"/><stop offset="1" stop-color="#e0a030"/></linearGradient></defs><path d="M0.3 1H3.6L4.4 0.2H9.7V7.3H0.3z" fill="#d9a540"/><rect x="0.6" y="1.7" width="9" height="5.2" fill="url(#fg)"/><rect x="0.3" y="6.7" width="9.4" height="0.7" fill="#a8741c"/><rect x="9.1" y="1.7" width="0.6" height="5.6" fill="#b98428"/></svg>
<div class="t" style="left:202.20px;top:321.40px;font-size:7.5px;letter-spacing:0.38px;color:#1a1a1a;-webkit-text-stroke:0.08px">ICO</div>
<div class="t" style="left:371.20px;top:321.40px;font-size:7.5px;letter-spacing:0.38px;color:#1a1a1a;-webkit-text-stroke:0.08px">Laptop-Backup\D\Hackin...</div>
<div class="t" style="left:481.70px;top:321.40px;font-size:7.5px;letter-spacing:0.38px;color:#1a1a1a;-webkit-text-stroke:0.08px">FOLDER</div>
<div class="t" style="left:571.80px;top:321.40px;font-size:7.5px;letter-spacing:0.38px;color:#1a1a1a;-webkit-text-stroke:0.08px">Laptop-Backup.bkf</div>
<svg style="position:absolute;left:183.60px;top:332.90px" width="9" height="8" viewBox="0 0 9 8"><rect x="0" y="0" width="9" height="8" rx="0.8" fill="#8a9cd6"/><rect x="0" y="0" width="9" height="1.6" rx="0.6" fill="#3e62d6"/><rect x="0.8" y="1.7" width="7.4" height="5.4" fill="#f4f6fb"/><rect x="1.8" y="2.6" width="5.4" height="3.6" fill="#cfd9ee"/><rect x="2.6" y="3.2" width="3.2" height="2.4" fill="#9fb0d8"/><rect x="0" y="7.2" width="9" height="0.8" fill="#5868a8"/></svg>
<div class="t" style="left:202.20px;top:332.40px;font-size:7.5px;letter-spacing:0.38px;color:#1a1a1a;-webkit-text-stroke:0.08px">aqua_7.ico</div>
<div class="t" style="left:371.20px;top:332.40px;font-size:7.5px;letter-spacing:0.38px;color:#1a1a1a;-webkit-text-stroke:0.08px">Hacking Tool Kit\vista.CO...</div>
<div class="t" style="left:481.70px;top:332.40px;font-size:7.5px;letter-spacing:0.38px;color:#1a1a1a;-webkit-text-stroke:0.08px">FILE</div>
<div class="t" style="left:571.80px;top:332.40px;font-size:7.5px;letter-spacing:0.38px;color:#1a1a1a;-webkit-text-stroke:0.08px">Laptop-Backup.bkf</div>
<div style="left:196.10px;top:342.70px;width:461.40px;height:9.60px;background:#316ac5"></div>
<svg style="position:absolute;left:183.60px;top:343.90px" width="9" height="8" viewBox="0 0 9 8"><rect x="0" y="0" width="9" height="8" rx="0.8" fill="#8a9cd6"/><rect x="0" y="0" width="9" height="1.6" rx="0.6" fill="#3e62d6"/><rect x="0.8" y="1.7" width="7.4" height="5.4" fill="#f4f6fb"/><rect x="1.8" y="2.6" width="5.4" height="3.6" fill="#cfd9ee"/><rect x="2.6" y="3.2" width="3.2" height="2.4" fill="#9fb0d8"/><rect x="0" y="7.2" width="9" height="0.8" fill="#5868a8"/></svg>
<div class="t" style="left:202.20px;top:343.40px;font-size:7.5px;letter-spacing:0.38px;color:#fff;-webkit-text-stroke:0.08px">aqua_3.ico</div>
<div class="t" style="left:371.20px;top:343.40px;font-size:7.5px;letter-spacing:0.38px;color:#fff;-webkit-text-stroke:0.08px">Hacking Tool Kit\vista.CO...</div>
<div class="t" style="left:481.70px;top:343.40px;font-size:7.5px;letter-spacing:0.38px;color:#fff;-webkit-text-stroke:0.08px">FILE</div>
<div class="t" style="left:571.80px;top:343.40px;font-size:7.5px;letter-spacing:0.38px;color:#fff;-webkit-text-stroke:0.08px">Laptop-Backup.bkf</div>
<svg style="position:absolute;left:183.60px;top:354.90px" width="9" height="8" viewBox="0 0 9 8"><rect x="0" y="0" width="9" height="8" rx="0.8" fill="#8a9cd6"/><rect x="0" y="0" width="9" height="1.6" rx="0.6" fill="#3e62d6"/><rect x="0.8" y="1.7" width="7.4" height="5.4" fill="#f4f6fb"/><rect x="1.8" y="2.6" width="5.4" height="3.6" fill="#cfd9ee"/><rect x="2.6" y="3.2" width="3.2" height="2.4" fill="#9fb0d8"/><rect x="0" y="7.2" width="9" height="0.8" fill="#5868a8"/></svg>
<div class="t" style="left:202.20px;top:354.40px;font-size:7.5px;letter-spacing:0.38px;color:#1a1a1a;-webkit-text-stroke:0.08px">aqua_4.ico</div>
<div class="t" style="left:371.20px;top:354.40px;font-size:7.5px;letter-spacing:0.38px;color:#1a1a1a;-webkit-text-stroke:0.08px">Hacking Tool Kit\vista.CO...</div>
<div class="t" style="left:481.70px;top:354.40px;font-size:7.5px;letter-spacing:0.38px;color:#1a1a1a;-webkit-text-stroke:0.08px">FILE</div>
<div class="t" style="left:571.80px;top:354.40px;font-size:7.5px;letter-spacing:0.38px;color:#1a1a1a;-webkit-text-stroke:0.08px">Laptop-Backup.bkf</div>
<svg style="position:absolute;left:183.60px;top:365.90px" width="9" height="8" viewBox="0 0 9 8"><rect x="0" y="0" width="9" height="8" rx="0.8" fill="#8a9cd6"/><rect x="0" y="0" width="9" height="1.6" rx="0.6" fill="#3e62d6"/><rect x="0.8" y="1.7" width="7.4" height="5.4" fill="#f4f6fb"/><rect x="1.8" y="2.6" width="5.4" height="3.6" fill="#cfd9ee"/><rect x="2.6" y="3.2" width="3.2" height="2.4" fill="#9fb0d8"/><rect x="0" y="7.2" width="9" height="0.8" fill="#5868a8"/></svg>
<div class="t" style="left:202.20px;top:365.40px;font-size:7.5px;letter-spacing:0.38px;color:#1a1a1a;-webkit-text-stroke:0.08px">aqua_5.ico</div>
<div class="t" style="left:371.20px;top:365.40px;font-size:7.5px;letter-spacing:0.38px;color:#1a1a1a;-webkit-text-stroke:0.08px">Hacking Tool Kit\vista.CO...</div>
<div class="t" style="left:481.70px;top:365.40px;font-size:7.5px;letter-spacing:0.38px;color:#1a1a1a;-webkit-text-stroke:0.08px">FILE</div>
<div class="t" style="left:571.80px;top:365.40px;font-size:7.5px;letter-spacing:0.38px;color:#1a1a1a;-webkit-text-stroke:0.08px">Laptop-Backup.bkf</div>
<svg style="position:absolute;left:183.60px;top:376.90px" width="9" height="8" viewBox="0 0 9 8"><rect x="0" y="0" width="9" height="8" rx="0.8" fill="#8a9cd6"/><rect x="0" y="0" width="9" height="1.6" rx="0.6" fill="#3e62d6"/><rect x="0.8" y="1.7" width="7.4" height="5.4" fill="#f4f6fb"/><rect x="1.8" y="2.6" width="5.4" height="3.6" fill="#cfd9ee"/><rect x="2.6" y="3.2" width="3.2" height="2.4" fill="#9fb0d8"/><rect x="0" y="7.2" width="9" height="0.8" fill="#5868a8"/></svg>
<div class="t" style="left:202.20px;top:376.40px;font-size:7.5px;letter-spacing:0.38px;color:#1a1a1a;-webkit-text-stroke:0.08px">aqua_6.ico</div>
<div class="t" style="left:371.20px;top:376.40px;font-size:7.5px;letter-spacing:0.38px;color:#1a1a1a;-webkit-text-stroke:0.08px">Hacking Tool Kit\vista.CO...</div>
<div class="t" style="left:481.70px;top:376.40px;font-size:7.5px;letter-spacing:0.38px;color:#1a1a1a;-webkit-text-stroke:0.08px">FILE</div>
<div class="t" style="left:571.80px;top:376.40px;font-size:7.5px;letter-spacing:0.38px;color:#1a1a1a;-webkit-text-stroke:0.08px">Laptop-Backup.bkf</div>
<svg style="position:absolute;left:183.60px;top:387.90px" width="9" height="8" viewBox="0 0 9 8"><rect x="0" y="0" width="9" height="8" rx="0.8" fill="#8a9cd6"/><rect x="0" y="0" width="9" height="1.6" rx="0.6" fill="#3e62d6"/><rect x="0.8" y="1.7" width="7.4" height="5.4" fill="#f4f6fb"/><rect x="1.8" y="2.6" width="5.4" height="3.6" fill="#cfd9ee"/><rect x="2.6" y="3.2" width="3.2" height="2.4" fill="#9fb0d8"/><rect x="0" y="7.2" width="9" height="0.8" fill="#5868a8"/></svg>
<div class="t" style="left:202.20px;top:387.40px;font-size:7.5px;letter-spacing:0.38px;color:#1a1a1a;-webkit-text-stroke:0.08px">aqua_8.ico</div>
<div class="t" style="left:371.20px;top:387.40px;font-size:7.5px;letter-spacing:0.38px;color:#1a1a1a;-webkit-text-stroke:0.08px">Hacking Tool Kit\vista.CO...</div>
<div class="t" style="left:481.70px;top:387.40px;font-size:7.5px;letter-spacing:0.38px;color:#1a1a1a;-webkit-text-stroke:0.08px">FILE</div>
<div class="t" style="left:571.80px;top:387.40px;font-size:7.5px;letter-spacing:0.38px;color:#1a1a1a;-webkit-text-stroke:0.08px">Laptop-Backup.bkf</div>
<svg style="position:absolute;left:184.20px;top:399.30px" width="10" height="7.5" viewBox="0 0 10 7.5"><defs><linearGradient id="fg" x1="0" y1="0" x2="0" y2="1"><stop offset="0" stop-color="#fde9b4"/><stop offset="0.45" stop-color="#f5c45e"/><stop offset="1" stop-color="#e0a030"/></linearGradient></defs><path d="M0.3 1H3.6L4.4 0.2H9.7V7.3H0.3z" fill="#d9a540"/><rect x="0.6" y="1.7" width="9" height="5.2" fill="url(#fg)"/><rect x="0.3" y="6.7" width="9.4" height="0.7" fill="#a8741c"/><rect x="9.1" y="1.7" width="0.6" height="5.6" fill="#b98428"/></svg>
<div class="t" style="left:202.20px;top:398.40px;font-size:7.5px;letter-spacing:0.38px;color:#1a1a1a;-webkit-text-stroke:0.08px">All Final Directory List(6-6-2007)</div>
<div class="t" style="left:371.20px;top:398.40px;font-size:7.5px;letter-spacing:0.38px;color:#1a1a1a;-webkit-text-stroke:0.08px">Laptop-Backup\C\All Fina...</div>
<div class="t" style="left:481.70px;top:398.40px;font-size:7.5px;letter-spacing:0.38px;color:#1a1a1a;-webkit-text-stroke:0.08px">FOLDER</div>
<div class="t" style="left:571.80px;top:398.40px;font-size:7.5px;letter-spacing:0.38px;color:#1a1a1a;-webkit-text-stroke:0.08px">Laptop-Backup.bkf</div>
<div style="left:222.50px;top:349.40px;width:114.00px;height:45.40px;background:rgba(0,0,0,0.12)"></div>
<div style="left:221.00px;top:347.90px;width:114.00px;height:45.30px;background:#faf9f5;border:1.2px solid #4d63b8"></div>
<div style="left:222.10px;top:349.10px;width:14.70px;height:43.00px;background:linear-gradient(to right,#dbe5f7,#b9cdf0)"></div>
<div style="left:222.10px;top:363.30px;width:111.90px;height:13.00px;background:#fcebc9;border:1px solid #5a6cb4"></div>
<svg style="position:absolute;left:224px;top:351.70px" width="10" height="9" viewBox="0 0 10 9"><rect x="0.4" y="0.4" width="9.2" height="8.2" fill="#e2462a" stroke="#9a2a16" stroke-width="0.7"/><path d="M2.5 2L7.5 7M7.5 2L2.5 7" stroke="#fff" stroke-width="1.7"/></svg>
<svg style="position:absolute;left:224px;top:365.50px" width="10" height="10" viewBox="0 0 10 10"><rect x="0" y="0" width="9.5" height="9.5" fill="#2c3f9a"/><rect x="2" y="0.5" width="5.5" height="3.5" fill="#e8ecf8"/><rect x="2" y="6" width="5.5" height="3.5" fill="#7d8ccc"/></svg>
<svg style="position:absolute;left:224px;top:379.50px" width="10" height="10" viewBox="0 0 10 10"><path d="M1 3L5 0.5L9.5 2.5V7L5 9.5L0.5 7z" fill="#4a64c8"/><path d="M3 3.5L7 1.5V6L3 8z" fill="#a9bdf0"/></svg>
<div class="t" style="left:243.60px;top:350.30px;font-size:7px;letter-spacing:0px;color:#1a1a1a;-webkit-text-stroke:0.05px">Remove from Cart</div>
<div class="t" style="left:244.10px;top:364.60px;font-size:7px;letter-spacing:0px;color:#1a1a1a;-webkit-text-stroke:0.05px">Save</div>
<div class="t" style="left:244.10px;top:378.80px;font-size:7px;letter-spacing:0px;color:#1a1a1a;-webkit-text-stroke:0.05px">Save All</div>
<div style="left:662.80px;top:17.50px;width:2.20px;height:441.50px;background:linear-gradient(to right,#0a48d8,#0842c8)"></div>
<div style="left:0.00px;top:456.60px;width:665.00px;height:2.40px;background:linear-gradient(to bottom,#0a4fe0,#0842c8)"></div>
<div style="left:0.00px;top:18.50px;width:1.00px;height:438.10px;background:#8da4cf"></div>
</body></html>
